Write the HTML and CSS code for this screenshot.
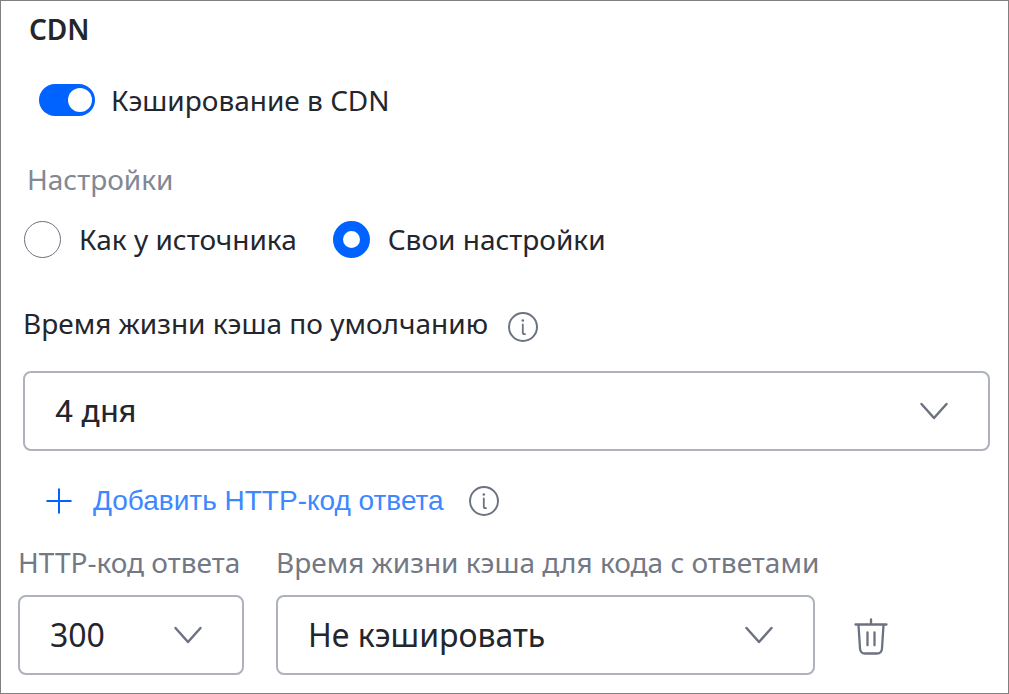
FILE: index.html
```html
<!DOCTYPE html>
<html lang="ru">
<head>
<meta charset="utf-8">
<meta name="viewport" content="width=device-width, initial-scale=1">
<title>CDN</title>
<link rel="stylesheet" href="styles.css">
</head>
<body>
<main class="panel">
  <h1 class="title">CDN</h1>

  <label class="switch-row">
    <input class="switch" type="checkbox" role="switch" checked>
    <span>Кэширование в CDN</span>
  </label>

  <fieldset class="settings">
    <legend class="caption">Настройки</legend>
    <div class="radios">
      <label class="radio-label"><input class="radio" type="radio" name="mode"><span>Как у источника</span></label>
      <label class="radio-label"><input class="radio" type="radio" name="mode" checked><span>Свои настройки</span></label>
    </div>
  </fieldset>

  <div class="default-ttl">
    <div class="label-row">
      <label for="ttl">Время жизни кэша по умолчанию</label>
      <button class="icon-button info-low" type="button" aria-label="Подсказка">
        <svg width="32" height="32" viewBox="0 0 32 32"><circle cx="16" cy="16" r="14"/><path class="stem" d="M15.800 13.500v8q0 1.700 1.700 1.700h.5"/><circle class="dot" cx="15.800" cy="9.500" r="1.300"/></svg>
      </button>
    </div>
    <div class="select-box">
      <select class="select select-wide" id="ttl"><option>4 дня</option></select>
      <svg class="chevron" width="30" height="20" viewBox="0 0 30 20"><path d="M2.500 3 15 17 27.500 3"/></svg>
    </div>
  </div>

  <div class="add-row">
    <button class="add-button" type="button">
      <svg width="28" height="28" viewBox="0 0 28 28"><path d="M14 1.500v25M1.500 14h25"/></svg>
      <span>Добавить HTTP-код ответа</span>
    </button>
    <button class="icon-button" type="button" aria-label="Подсказка">
      <svg width="32" height="32" viewBox="0 0 32 32"><circle cx="16" cy="16" r="14"/><path class="stem" d="M15.800 13.500v8q0 1.700 1.700 1.700h.5"/><circle class="dot" cx="15.800" cy="9.500" r="1.300"/></svg>
    </button>
  </div>

  <div class="codes">
    <div class="field">
      <label class="field-label" for="code">HTTP-код ответа</label>
      <div class="select-box">
        <select class="select" id="code"><option>300</option></select>
        <svg class="chevron" width="30" height="20" viewBox="0 0 30 20"><path d="M2.500 3 15 17 27.500 3"/></svg>
      </div>
    </div>
    <div class="field">
      <label class="field-label" for="code-ttl">Время жизни кэша для кода с ответами</label>
      <div class="select-box">
        <select class="select" id="code-ttl"><option>Не кэшировать</option></select>
        <svg class="chevron" width="30" height="20" viewBox="0 0 30 20"><path d="M2.500 3 15 17 27.500 3"/></svg>
      </div>
    </div>
    <button class="icon-button delete" type="button" aria-label="Удалить">
      <svg width="34" height="40" viewBox="0 0 34 40"><path d="M1.500 9.500h31M17 4.300v5M4.500 10l1.500 23.500q.4 5 5 5h12q4.600 0 5-5L29.500 10M13.500 17.300v13M20.500 17.300v13"/></svg>
    </button>
  </div>
</main>
</body>
</html>
```
FILE: styles.css
```css
* {
  box-sizing: border-box;
}

body {
  margin: 0;
  background: #fff;
  color: #23262d;
  font: 28px/40px "Noto Sans", "Open Sans", sans-serif;
}

.panel {
  min-height: 100vh;
  padding: 8px 18px 18px 17px;
  border: 1px solid #808080;
}

.title {
  margin: 0 0 31px;
  padding-left: 11px;
  font-size: 28px;
  font-weight: 600;
  line-height: 40px;
}

.switch-row {
  display: flex;
  align-items: center;
  gap: 16px;
  margin-bottom: 39px;
  padding-left: 21px;
}

.switch {
  appearance: none;
  display: flex;
  justify-content: flex-end;
  flex: none;
  width: 56px;
  height: 32px;
  margin: 0;
  padding: 4px 3px;
  border-radius: 16px;
  background: #0062ff;
}

.switch::before {
  content: "";
  width: 24px;
  height: 24px;
  border-radius: 50%;
  background: #fff;
}

.switch:not(:checked) {
  justify-content: flex-start;
  background: #a5a9b5;
}

.settings {
  min-width: 0;
  margin: 0 0 44px;
  padding: 0;
  border: 0;
}

.caption {
  margin-bottom: 20px;
  padding: 0 0 0 9px;
  color: #828894;
}

.radios {
  display: flex;
  flex-wrap: wrap;
  gap: 36px;
  padding-left: 6px;
}

.radio-label {
  display: flex;
  align-items: center;
  gap: 18px;
}

.radio {
  appearance: none;
  flex: none;
  width: 37px;
  height: 37px;
  margin: 0;
  border: 1px solid #6d7280;
  border-radius: 50%;
}

.radio:checked {
  border: 10px solid #0062ff;
}

.default-ttl {
  margin-bottom: 30px;
  padding-left: 5px;
}

.label-row {
  display: flex;
  align-items: center;
  gap: 19px;
  margin-bottom: 28px;
}

.icon-button {
  display: flex;
  align-items: center;
  justify-content: center;
  flex: none;
  padding: 0;
  border: 0;
  background: none;
}

.info-low {
  padding-top: 8px;
}

.icon-button svg,
.chevron {
  fill: none;
  stroke: #6d7280;
  stroke-width: 2;
  stroke-linecap: round;
  stroke-linejoin: round;
}

.chevron {
  grid-area: 1 / 1;
  justify-self: end;
  margin-right: 41px;
  pointer-events: none;
  stroke-width: 2.5;
}

.icon-button .stem {
  stroke-width: 1.8;
}

.icon-button .dot {
  fill: #6d7280;
  stroke: none;
}

.select-box {
  display: grid;
  align-items: center;
}

.select {
  appearance: none;
  grid-area: 1 / 1;
  width: 100%;
  height: 80px;
  padding: 0 80px 0 30px;
  border: 2px solid #aeb2bd;
  border-radius: 8px;
  background: #fff;
  color: #23262d;
  font: 32px/40px "Noto Sans", "Open Sans", sans-serif;
}

.select-wide {
  font-family: Roboto, sans-serif;
}

.add-row {
  display: flex;
  align-items: center;
  gap: 24px;
  margin-bottom: 21px;
  padding-left: 27px;
}

.add-button {
  display: flex;
  align-items: center;
  gap: 20px;
  padding: 0;
  border: 0;
  background: none;
  color: #3d87ff;
  font: 28px/40px "Liberation Sans", sans-serif;
}

.add-button svg {
  fill: none;
  stroke: #0062ff;
  stroke-width: 2;
}

.codes {
  display: grid;
  grid-template-columns: 226px minmax(0, 1fr) 48px;
  gap: 32px;
  padding-right: 95px;
}

.field-label {
  display: block;
  margin-bottom: 13px;
  color: #737885;
  white-space: nowrap;
}

.delete {
  align-self: end;
  height: 80px;
}

.delete svg {
  stroke-width: 2.3;
}
```
